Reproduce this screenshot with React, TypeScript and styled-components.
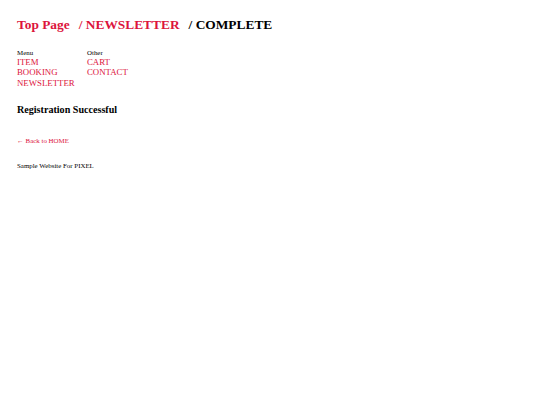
import React from "react";
import styled, { createGlobalStyle } from "styled-components";

const Global = createGlobalStyle`
  html, body { margin: 0; padding: 0; background: #fff; }
  body { font-family: "Liberation Serif", "Times New Roman", serif; color: #000; }
  a { text-decoration: none; }
`;

const Page = styled.div`
  padding: 15px 17px 0;
`;

const Title = styled.h1`
  margin: 0;
  display: flex;
  gap: 9px;
  font-size: 13.4px;
  font-weight: bold;
  line-height: 20px;
`;

const Crumb = styled.a<{ $active?: boolean }>`
  color: ${(p) => (p.$active ? "#000" : "#dc143c")};
`;

const Nav = styled.nav`
  margin-top: 14px;
  display: grid;
  grid-template-columns: 70px 70px;
`;

const NavCol = styled.div`
  display: flex;
  flex-direction: column;
`;

const NavHead = styled.div`
  font-size: 6.9px;
  line-height: 8px;
`;

const NavLink = styled.a`
  color: #dc143c;
  font-size: 8.8px;
  line-height: 10.3px;
`;

const Heading = styled.h2`
  margin: 15px 0 0;
  font-size: 10.1px;
  font-weight: bold;
  line-height: 14px;
`;

const Back = styled.a`
  display: block;
  margin-top: 20px;
  color: #dc143c;
  font-size: 6.9px;
  line-height: 8px;
`;

const Footer = styled.footer`
  margin-top: 17px;
  font-size: 6.9px;
  line-height: 8px;
`;

export default function App() {
  return (
    <>
      <Global />
      <Page>
        <Title>
          <Crumb>Top Page</Crumb>
          <Crumb>/ NEWSLETTER</Crumb>
          <Crumb $active>/ COMPLETE</Crumb>
        </Title>
        <Nav>
          <NavCol>
            <NavHead>Menu</NavHead>
            <NavLink>ITEM</NavLink>
            <NavLink>BOOKING</NavLink>
            <NavLink>NEWSLETTER</NavLink>
          </NavCol>
          <NavCol>
            <NavHead>Other</NavHead>
            <NavLink>CART</NavLink>
            <NavLink>CONTACT</NavLink>
          </NavCol>
        </Nav>
        <Heading>Registration Successful</Heading>
        <Back>← Back to HOME</Back>
        <Footer>Sample Website For PIXEL</Footer>
      </Page>
    </>
  );
}
